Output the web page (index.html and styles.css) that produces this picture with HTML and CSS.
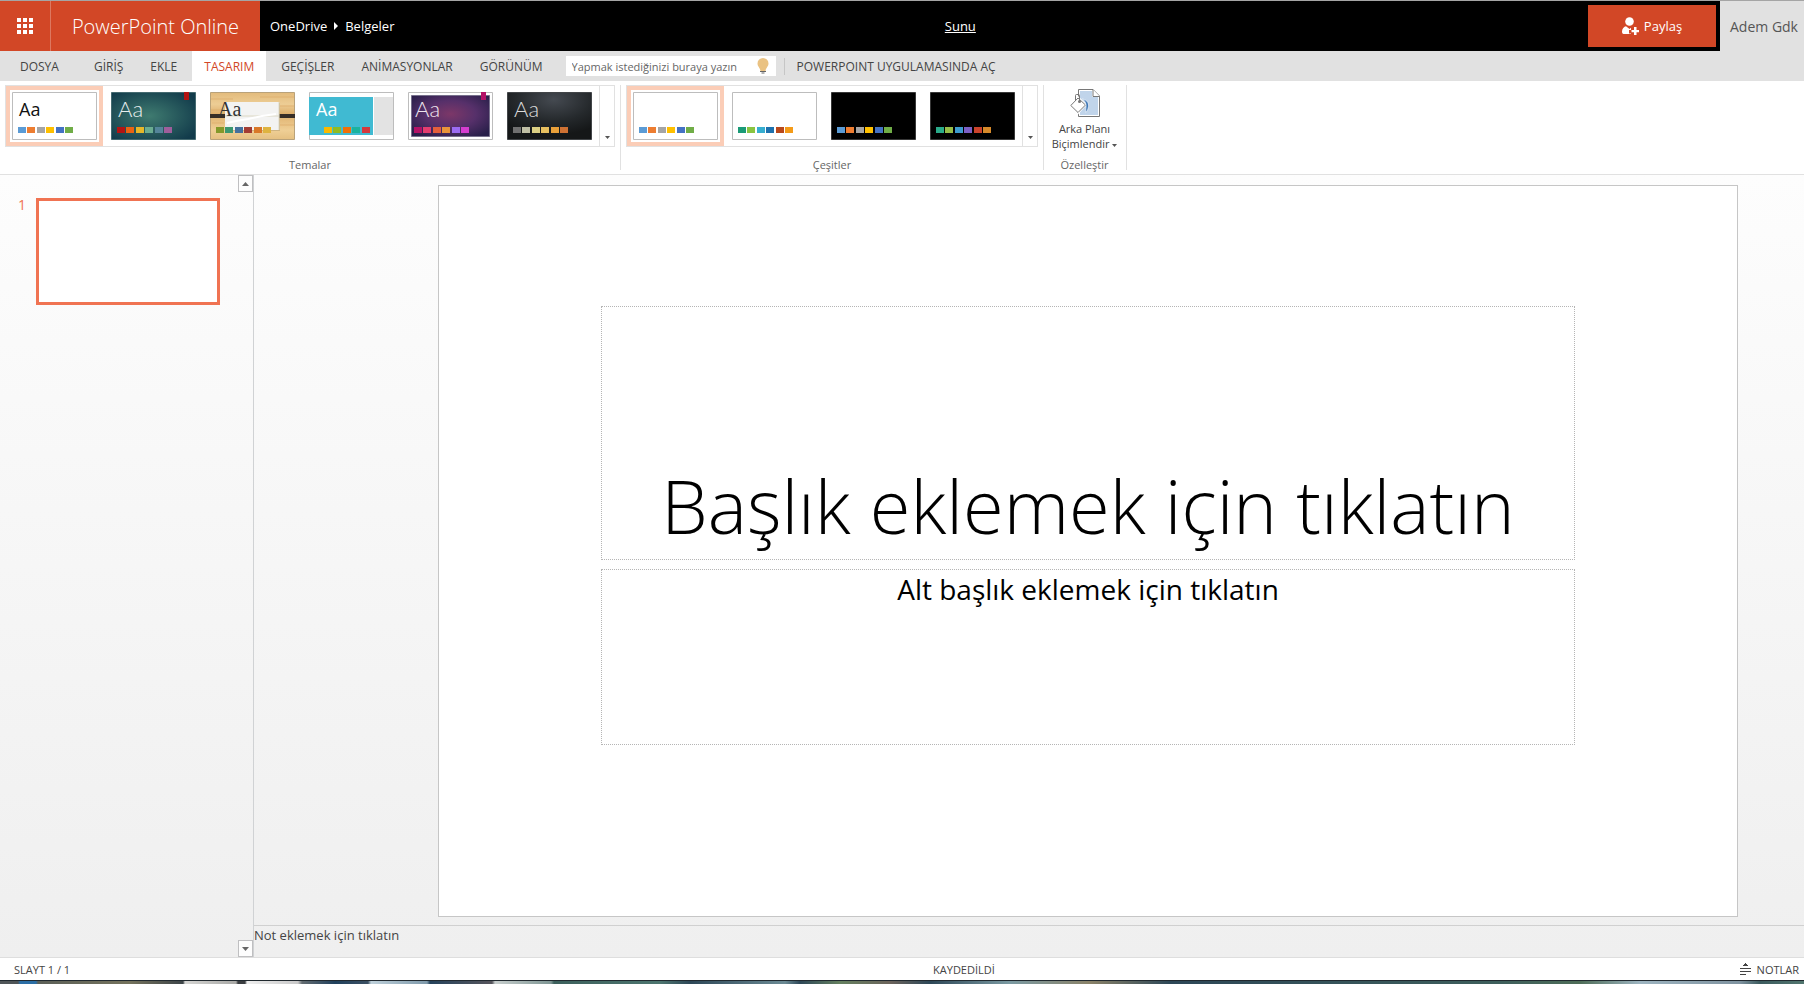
FILE: index.html
```html
<!DOCTYPE html>
<html lang="tr">
<head>
<meta charset="utf-8">
<title>Sunu - PowerPoint Online</title>
<link rel="stylesheet" href="styles.css">
</head>
<body>
<div class="app">
  <header class="topbar">
    <button class="waffle" aria-label="Uygulamalar">
      <svg width="16" height="16" viewBox="0 0 16 16" fill="#fff" shape-rendering="crispEdges"><path d="M0 0h4v4H0zM6 0h4v4H6zM12 0h4v4h-4zM0 6h4v4H0zM6 6h4v4H6zM12 6h4v4h-4zM0 12h4v4H0zM6 12h4v4H6zM12 12h4v4h-4z"/></svg>
    </button>
    <a class="brand" href="#">PowerPoint Online</a>
    <nav class="crumbs">
      <a href="#">OneDrive</a>
      <svg width="4" height="8" viewBox="0 0 4 8" fill="#fff"><path d="M0 0l4 4-4 4z"/></svg>
      <a href="#">Belgeler</a>
    </nav>
    <a class="doc-name" href="#">Sunu</a>
    <div class="share-area">
      <button class="share">
        <svg width="17" height="18" viewBox="0 0 17 18" fill="#fff"><circle cx="7.500" cy="4.500" r="4.300"/><path d="M0 14.500C0 11.500 2 9.500 4 9.200L7.500 12l1.500-1.200v2.200H7v3.500h2V17H1.500C.5 17 0 16 0 14.500z"/><path d="M12 10h2.500v3H17v2.200h-2.500V18H12v-2.800H9.500V13H12z"/></svg>
        <span>Paylaş</span>
      </button>
    </div>
    <a class="user" href="#">Adem Gdk</a>
  </header>

  <nav class="tabs">
    <button class="tab file">DOSYA</button>
    <button class="tab">GİRİŞ</button>
    <button class="tab">EKLE</button>
    <button class="tab active">TASARIM</button>
    <button class="tab">GEÇİŞLER</button>
    <button class="tab">ANİMASYONLAR</button>
    <button class="tab">GÖRÜNÜM</button>
    <div class="tell-me">
      <input type="text" aria-label="Ne yapmak istediğinizi yazın" placeholder="Yapmak istediğinizi buraya yazın">
      <svg width="12" height="16" viewBox="0 0 12 16"><path d="M6 0a5.500 5.500 0 0 1 5.500 5.500C11.500 8.500 9 9.500 8.500 13h-5C3 9.500.5 8.500.5 5.500A5.500 5.500 0 0 1 6 0z" fill="#eac282"/><path d="M3 13.500h6M4.500 15h3" stroke="#666" stroke-width="1"/></svg>
    </div>
    <a class="open-app" href="#">POWERPOINT UYGULAMASINDA AÇ</a>
  </nav>

  <section class="ribbon">
    <div class="group">
      <div class="gallery">
        <div class="items">
        <button class="thumb selected" aria-label="Office Teması"><svg width="85" height="48" viewBox="0 0 85 48"><path d="M.5.500h84v47H.5z" fill="#fff" stroke="#bdbdbd"/><text class="aa" x="7" y="24" fill="#111">Aa</text><g class="sw"><path fill="#5b9bd5" d="M6 35h8v6H6z"/><path fill="#ed7d31" d="M15 35h8v6h-8z"/><path fill="#a5a5a5" d="M25 35h8v6h-8z"/><path fill="#ffc000" d="M34 35h8v6h-8z"/><path fill="#4472c4" d="M44 35h8v6h-8z"/><path fill="#70ad47" d="M53 35h8v6h-8z"/></g></svg></button>
        <button class="thumb" aria-label="İyon"><svg width="85" height="48" viewBox="0 0 85 48"><defs><radialGradient id="g1" cx=".45" cy=".5" r=".65"><stop offset="0" stop-color="#3f7b70"/><stop offset="1" stop-color="#123b4b"/></radialGradient></defs><path d="M.5.500h84v47H.5z" fill="url(#g1)" stroke="#456a70"/><path fill="#b31412" d="M73 0h5v8h-5z"/><text class="aa wide" x="7" y="25" fill="#e8eeee">Aa</text><g class="sw"><path fill="#b31412" d="M6 35h8v6H6z"/><path fill="#ea6312" d="M15 35h8v6h-8z"/><path fill="#e6b729" d="M25 35h8v6h-8z"/><path fill="#6aac90" d="M34 35h8v6h-8z"/><path fill="#54849a" d="M44 35h8v6h-8z"/><path fill="#9e5e9b" d="M53 35h8v6h-8z"/></g></svg></button>
        <button class="thumb" aria-label="Organik"><svg width="85" height="48" viewBox="0 0 85 48"><defs><linearGradient id="g2" x1="0" y1="0" x2="0" y2="1"><stop offset="0" stop-color="#e3bb7c"/><stop offset=".25" stop-color="#edcd95"/><stop offset=".45" stop-color="#dfb06c"/><stop offset=".8" stop-color="#efcf96"/><stop offset="1" stop-color="#e5c081"/></linearGradient></defs><path d="M.5.500h84v47H.5z" fill="url(#g2)" stroke="#b9a27a"/><path d="M1 7h22M50 5h34M1 18h13M70 14h14M2 31h12M70 33h14" stroke="#dba764" stroke-width="1" opacity=".6"/><path d="M0 22h17v4H0zM68 22h17v4H68z" fill="#372e27"/><path d="M16 11h54v28H16z" fill="#9e8b66" opacity=".4"/><path d="M15 10h54v28H15z" fill="#f3f3f2"/><path d="M15 24h54M69 10v28" stroke="#dcd8c4"/><path d="M17 31l9-2 12-2 14-3 14-2" stroke="#fff" stroke-width="2" fill="none"/><text class="aa serif" x="8" y="24" fill="#333">Aa</text><g class="sw"><path fill="#83992a" d="M6 35h8v6H6z"/><path fill="#3c9770" d="M15 35h8v6h-8z"/><path fill="#44709d" d="M25 35h8v6h-8z"/><path fill="#a23c33" d="M34 35h8v6h-8z"/><path fill="#d97828" d="M44 35h8v6h-8z"/><path fill="#deb340" d="M53 35h8v6h-8z"/></g></svg></button>
        <button class="thumb" aria-label="Çerçeve"><svg width="85" height="48" viewBox="0 0 85 48"><path d="M.5.500h84v47H.5z" fill="#fff" stroke="#bdbdbd"/><path fill="#40bad2" d="M0 5h64v38H0z"/><path fill="#e3e3e3" d="M65 5h19v38H65z"/><text class="aa" x="7" y="24" fill="#fff">Aa</text><g class="sw"><path fill="#fab900" d="M15 35h8v6h-8z"/><path fill="#90bb23" d="M24 35h8v6h-8z"/><path fill="#ee7008" d="M34 35h8v6h-8z"/><path fill="#1ab39f" d="M43 35h8v6h-8z"/><path fill="#d5393d" d="M53 35h8v6h-8z"/></g></svg></button>
        <button class="thumb" aria-label="İyon Toplantı Odası"><svg width="85" height="48" viewBox="0 0 85 48"><defs><radialGradient id="g3" cx=".5" cy=".45" r=".65"><stop offset="0" stop-color="#7c3768"/><stop offset=".5" stop-color="#56306a"/><stop offset="1" stop-color="#281f49"/></radialGradient></defs><path d="M.5.500h84v47H.5z" fill="#fff" stroke="#bdbdbd"/><path d="M3.500 3.500h78v41h-78z" fill="url(#g3)" stroke="#77708c"/><path fill="#b31166" d="M73 0h5v8h-5z"/><text class="aa wide" x="7" y="25" fill="#efe6ee">Aa</text><g class="sw"><path fill="#b31166" d="M6 35h8v6H6z"/><path fill="#e33d6f" d="M15 35h8v6h-8z"/><path fill="#e45f3c" d="M25 35h8v6h-8z"/><path fill="#e9943a" d="M34 35h8v6h-8z"/><path fill="#9b6bf2" d="M44 35h8v6h-8z"/><path fill="#d53dd0" d="M53 35h8v6h-8z"/></g></svg></button>
        <button class="thumb" aria-label="Ağ"><svg width="85" height="48" viewBox="0 0 85 48"><defs><radialGradient id="g4" cx=".55" cy=".15" r=".75"><stop offset="0" stop-color="#454a51"/><stop offset=".6" stop-color="#25292c"/><stop offset="1" stop-color="#151718"/></radialGradient></defs><path d="M.5.500h84v47H.5z" fill="url(#g4)" stroke="#424548"/><text class="aa wide" x="7" y="25" fill="#dcdcdc">Aa</text><g class="sw"><path fill="#6f6f6f" d="M6 35h8v6H6z"/><path fill="#bfbfa5" d="M15 35h8v6h-8z"/><path fill="#dcd084" d="M25 35h8v6h-8z"/><path fill="#e7bf5f" d="M34 35h8v6h-8z"/><path fill="#e9a039" d="M44 35h8v6h-8z"/><path fill="#cf7133" d="M53 35h8v6h-8z"/></g></svg></button>
        </div>
        <button class="more" aria-label="Diğer temalar"><svg width="5" height="3" viewBox="0 0 5 3"><path d="M0 0h5L2.500 3z" fill="#555"/></svg></button>
      </div>
      <div class="label">Temalar</div>
    </div>

    <div class="group">
      <div class="gallery">
        <div class="items">
        <button class="thumb selected" aria-label="Çeşit 1"><svg width="85" height="48" viewBox="0 0 85 48"><path d="M.5.500h84v47H.5z" fill="#fff" stroke="#bdbdbd"/><g class="sw"><path fill="#5b9bd5" d="M6 35h8v6H6z"/><path fill="#ed7d31" d="M15 35h8v6h-8z"/><path fill="#a5a5a5" d="M25 35h8v6h-8z"/><path fill="#ffc000" d="M34 35h8v6h-8z"/><path fill="#4472c4" d="M44 35h8v6h-8z"/><path fill="#70ad47" d="M53 35h8v6h-8z"/></g></svg></button>
        <button class="thumb" aria-label="Çeşit 2"><svg width="85" height="48" viewBox="0 0 85 48"><path d="M.5.500h84v47H.5z" fill="#fff" stroke="#bdbdbd"/><g class="sw"><path fill="#1b9b77" d="M6 35h8v6H6z"/><path fill="#8ac441" d="M15 35h8v6h-8z"/><path fill="#36aed0" d="M25 35h8v6h-8z"/><path fill="#1d71ae" d="M34 35h8v6h-8z"/><path fill="#b9481b" d="M44 35h8v6h-8z"/><path fill="#f49b18" d="M53 35h8v6h-8z"/></g></svg></button>
        <button class="thumb" aria-label="Çeşit 3"><svg width="85" height="48" viewBox="0 0 85 48"><path d="M.5.500h84v47H.5z" fill="#000" stroke="#383838"/><g class="sw"><path fill="#5b9bd5" d="M6 35h8v6H6z"/><path fill="#ed7d31" d="M15 35h8v6h-8z"/><path fill="#a5a5a5" d="M25 35h8v6h-8z"/><path fill="#ffc000" d="M34 35h8v6h-8z"/><path fill="#4472c4" d="M44 35h8v6h-8z"/><path fill="#70ad47" d="M53 35h8v6h-8z"/></g></svg></button>
        <button class="thumb" aria-label="Çeşit 4"><svg width="85" height="48" viewBox="0 0 85 48"><path d="M.5.500h84v47H.5z" fill="#000" stroke="#383838"/><g class="sw"><path fill="#2aab89" d="M6 35h8v6H6z"/><path fill="#96bd48" d="M15 35h8v6h-8z"/><path fill="#3d9bcf" d="M25 35h8v6h-8z"/><path fill="#7b5fc4" d="M34 35h8v6h-8z"/><path fill="#ca432c" d="M44 35h8v6h-8z"/><path fill="#d78a2a" d="M53 35h8v6h-8z"/></g></svg></button>
        </div>
        <button class="more" aria-label="Diğer çeşitler"><svg width="5" height="3" viewBox="0 0 5 3"><path d="M0 0h5L2.500 3z" fill="#555"/></svg></button>
      </div>
      <div class="label">Çeşitler</div>
    </div>

    <div class="group customize">
      <button class="format-bg">
        <svg width="30" height="28" viewBox="0 0 30 28"><path d="M8.500.500H23L29.500 7v20.500h-21z" fill="#fff" stroke="#777"/><path d="M10 2h12v6h6v18H10z" fill="#c0d4ea"/><path d="M23 .5V7.500h6.500" fill="#fff" stroke="#777"/><path d="M0 16.500L8 7l9 8.500-9 10z" fill="#fff"/><path d="M.8 16.500L8 9l7.500 7L8 23.500z" fill="#fff" stroke="#777"/><path d="M5.500 12V6.500q0-1 1-1h2q1 0 1 1V13" fill="none" stroke="#777"/><circle cx="9.500" cy="12.500" r="1.500" fill="#777"/><path d="M12.500 10C17 11 19 14 18.500 17.500c-.3 2-1 4-2.500 6-.8-3 .5-5 0-8C15.500 13 14 11 12.500 10z" fill="#3f78b7" stroke="#fff" stroke-width=".6"/></svg>
        <span>Arka Planı<br>Biçimlendir <svg width="5" height="3" viewBox="0 0 5 3"><path d="M0 0h5L2.500 3z" fill="#555"/></svg></span>
      </button>
      <div class="label">Özelleştir</div>
    </div>
  </section>

  <main class="work">
    <aside class="slides">
      <div class="slide-item">
        <span class="num">1</span>
        <button class="slide-thumb" aria-label="Slayt 1"></button>
      </div>
      <div class="scroll">
        <button aria-label="Yukarı kaydır"><svg width="7" height="4" viewBox="0 0 7 4"><path d="M0 4h7L3.500 0z" fill="#666"/></svg></button>
        <button aria-label="Aşağı kaydır"><svg width="7" height="4" viewBox="0 0 7 4"><path d="M0 0h7L3.500 4z" fill="#666"/></svg></button>
      </div>
    </aside>
    <div class="editor">
      <div class="stage">
        <div class="slide">
          <h1 class="ph title">Başlık eklemek için tıklatın</h1>
          <p class="ph subtitle">Alt başlık eklemek için tıklatın</p>
        </div>
      </div>
      <div class="notes">Not eklemek için tıklatın</div>
    </div>
  </main>

  <footer class="status">
    <span class="pos">SLAYT 1 / 1</span>
    <span>KAYDEDİLDİ</span>
    <div class="status-right">
      <button class="notes-btn">
        <svg width="11" height="12" viewBox="0 0 11 12" fill="#444" shape-rendering="crispEdges"><path d="M3 3h5V2H7V1H6V0H5v1H4v1H3zM0 5h11v1H0zM0 8h11v1H0zM0 11h6v1H0z"/></svg>
        <span>NOTLAR</span>
      </button>
    </div>
  </footer>
  <div class="taskbar"></div>
</div>
</body>
</html>
```

FILE: styles.css
```css
* { box-sizing: border-box; }
body { margin: 0; font-family: "Open Sans", "Noto Sans", sans-serif; font-size: 12px; color: #444; }
button, input { font: inherit; color: inherit; border: 0; padding: 0; background: none; }
a { color: inherit; text-decoration: none; }
svg { display: block; flex: none; }
.app { height: 100vh; display: flex; flex-direction: column; background: #fff; overflow: hidden; }

.topbar { display: flex; flex: none; height: 51px; border-top: 1px solid #a5a5a5; background: #000; color: #fff; font-size: 13px; white-space: nowrap; }
.waffle { width: 51px; display: grid; place-items: center; background: #d24726; border-right: 1px solid #dd7860; }
.brand { width: 209px; display: grid; place-items: center; background: #d24726; font-size: 20px; font-weight: 300; }
.crumbs { flex: 11 1 0; display: flex; align-items: center; gap: 7px; padding-left: 10px; }
.doc-name { align-self: center; text-decoration: underline; }
.share-area { flex: 12 1 0; display: flex; justify-content: flex-end; padding: 4px; }
.share { width: 128px; display: flex; align-items: center; justify-content: center; gap: 5px; background: #d24726; }
.user { width: 84px; padding-left: 10px; display: flex; align-items: center; background: #e1e1e1; color: #555; font-size: 14px; }

.tabs { display: flex; flex: none; align-items: center; height: 30px; background: #e1e1e1; white-space: nowrap; }
.tab { height: 30px; padding: 0 12px; margin-right: 3px; }
.tab.file { padding: 0 20px; }
.tab.active { background: #fff; color: #d24726; }
.tell-me { width: 210px; height: 20px; margin-left: 8px; padding: 0 7px 0 6px; display: flex; align-items: center; background: #fff; }
.tell-me input { flex: 1; min-width: 0; outline: 0; font-size: 11px; }
.tell-me input::placeholder { color: #666; opacity: 1; }
.open-app { margin-left: 8px; padding-left: 12px; border-left: 1px solid #c6c6c6; }

.ribbon { flex: none; display: flex; padding: 4px 0 4px 5px; border-bottom: 1px solid #e1e1e1; color: #666; }
.group { display: flex; flex-direction: column; justify-content: space-between; height: 85px; padding-right: 5px; margin-right: 5px; border-right: 1px solid #e1e1e1; font-size: 11px; }
.gallery { display: flex; height: 62px; border: 1px solid #e1e1e1; }
.items { display: flex; gap: 2px; padding-right: 1px; }
.thumb { width: 97px; height: 60px; padding: 6px; }
.thumb.selected { padding: 2px; border: 4px solid #fbcdb7; }
.more { width: 15px; display: flex; align-items: flex-end; justify-content: center; padding-bottom: 7px; border-left: 1px solid #e1e1e1; }
.label { text-align: center; line-height: 10px; }
.aa { font-size: 18px; font-family: "Open Sans", sans-serif; }
.wide { font-size: 22px; font-family: Lato, sans-serif; font-weight: 300; }
.serif { font-size: 20px; font-family: "Liberation Serif", serif; }
.customize { width: 78px; padding-right: 6px; }
.format-bg { display: flex; flex-direction: column; align-items: center; gap: 4px; padding-top: 4px; line-height: 15px; color: #444; white-space: nowrap; }
.format-bg span svg { display: inline-block; vertical-align: middle; }

.work { flex: 1; min-height: 0; display: flex; background: linear-gradient(#fdfdfd, #efefef); border-bottom: 1px solid #dedede; }
.slides { width: 254px; flex: none; display: flex; justify-content: space-between; border-right: 1px solid #d0d2d4; }
.slide-item { display: flex; gap: 10px; padding: 23px 0 0 18px; }
.num { width: 8px; color: #f07352; font-size: 14px; line-height: 14px; }
.slide-thumb { width: 184px; height: 107px; background: #fff; border: 3px solid #f07352; }
.scroll { width: 15px; display: flex; flex-direction: column; justify-content: space-between; }
.scroll button { height: 17px; display: grid; place-items: center; background: #fdfdfd; border: 1px solid #bfbfc1; }
.editor { flex: 1; min-width: 0; display: flex; flex-direction: column; }
.stage { flex: 1; min-height: 0; display: flex; padding: 10px 66px 8px 184px; }
.slide { flex: 1; display: grid; grid-template-columns: 1fr 6fr 1fr; grid-template-rows: 120fr 255fr 9fr 177fr 171fr; background: #fff; border: 1px solid #c6c6c6; color: #000; }
.ph { grid-column: 2; margin: 0; border: 1px dotted #b5b5b5; text-align: center; white-space: nowrap; min-height: 0; }
.title { grid-row: 2; display: flex; align-items: flex-end; justify-content: center; padding-bottom: 8px; font-size: 74px; line-height: 90px; font-weight: 300; }
.subtitle { grid-row: 4; font-size: 28px; line-height: 38px; }
.notes { height: 32px; border-top: 1px solid #d0d0d0; font-size: 13px; line-height: 18px; }

.status { flex: none; height: 22px; display: flex; align-items: center; font-size: 11px; white-space: nowrap; }
.pos { flex: 8 1 0; padding-left: 14px; }
.status-right { flex: 7 1 0; display: flex; justify-content: flex-end; padding-right: 5px; }
.notes-btn { display: flex; align-items: center; gap: 6px; }
.taskbar { flex: none; height: 4px; border-top: 1px solid #20282e; background: linear-gradient(90deg, #4f5558 0 18px, #2b6ea5 20px 36px, #5c6058 38px, #74725c 130px, #3d4448 183px, #d5d5d3 185px, #a9a9a6 236px, #3a3d40 238px 245px, #eee 247px, #c9c9c9 298px, #626b70 302px, #20405c 335px, #3c5063 368px, #bed0da 371px, #7f9aab 427px, #25425b 430px, #56555c 492px, #c7cecd 495px, #7f9694 551px, #3c605c 554px, #4d756f 660px, #2d4757 690px, #6b8a94 785px, #2d4757 800px, #65805f 840px, #6b635b 890px, #2d4757 930px, #7b9aa2 1010px, #8a8268 1090px, #2d4757 1170px, #3e5f5c 1500px, #4e6d58 1580px, #9db4c0 1640px, #7f93a0 1740px, #3c5b5e 1760px, #52766f 100%); }
```
